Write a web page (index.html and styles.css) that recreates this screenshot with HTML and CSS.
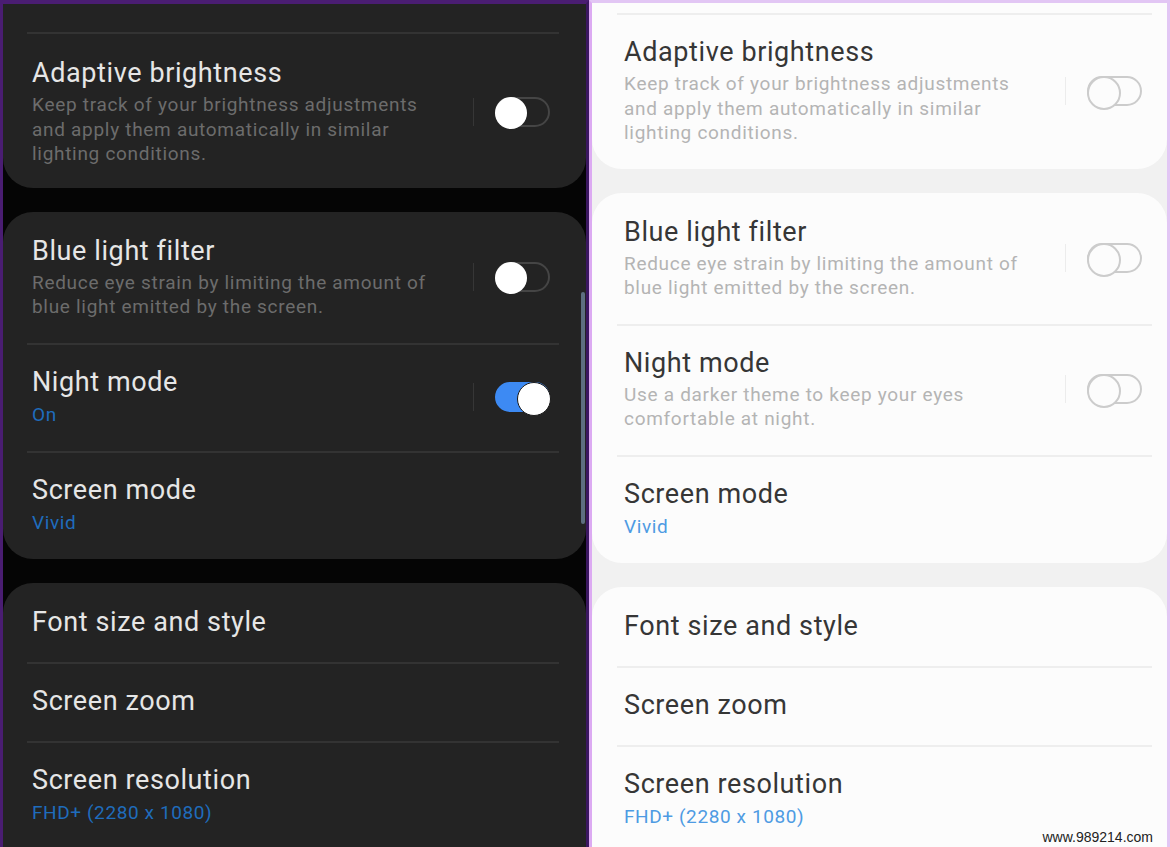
FILE: index.html
```html
<!DOCTYPE html>
<html lang="en">
<head>
    <meta charset="UTF-8">
    <meta name="viewport" content="width=device-width, initial-scale=1.0">
    <title>Display settings</title>
    <link rel="stylesheet" href="styles.css">
</head>
<body>
    <div class="screens">
        <!-- Dark theme -->
        <section class="screen screen-dark">
            <div class="settings">
                <div class="card">
                    <div class="row row-cut"></div>
                    <div class="row row-first">
                        <div class="row-text">
                            <div class="title">Adaptive brightness</div>
                            <div class="desc">Keep track of your brightness adjustments<br>and apply them automatically in similar<br>lighting conditions.</div>
                        </div>
                        <div class="row-control">
                            <span class="sep"></span>
                            <span class="toggle"></span>
                        </div>
                    </div>
                </div>

                <div class="card">
                    <div class="row">
                        <div class="row-text">
                            <div class="title">Blue light filter</div>
                            <div class="desc">Reduce eye strain by limiting the amount of<br>blue light emitted by the screen.</div>
                        </div>
                        <div class="row-control">
                            <span class="sep"></span>
                            <span class="toggle"></span>
                        </div>
                    </div>
                    <div class="row">
                        <div class="row-text">
                            <div class="title">Night mode</div>
                            <div class="value">On</div>
                        </div>
                        <div class="row-control">
                            <span class="sep"></span>
                            <span class="toggle on"></span>
                        </div>
                    </div>
                    <div class="row">
                        <div class="row-text">
                            <div class="title">Screen mode</div>
                            <div class="value">Vivid</div>
                        </div>
                    </div>
                </div>

                <div class="card">
                    <div class="row">
                        <div class="row-text">
                            <div class="title">Font size and style</div>
                        </div>
                    </div>
                    <div class="row">
                        <div class="row-text">
                            <div class="title">Screen zoom</div>
                        </div>
                    </div>
                    <div class="row">
                        <div class="row-text">
                            <div class="title">Screen resolution</div>
                            <div class="value">FHD+ (2280 x 1080)</div>
                        </div>
                    </div>
                    <div class="row row-cut"></div>
                </div>
            </div>
            <span class="scrollbar"></span>
        </section>

        <!-- Light theme -->
        <section class="screen screen-light">
            <div class="settings">
                <div class="card">
                    <div class="row row-cut"></div>
                    <div class="row">
                        <div class="row-text">
                            <div class="title">Adaptive brightness</div>
                            <div class="desc">Keep track of your brightness adjustments<br>and apply them automatically in similar<br>lighting conditions.</div>
                        </div>
                        <div class="row-control">
                            <span class="sep"></span>
                            <span class="toggle"></span>
                        </div>
                    </div>
                </div>

                <div class="card">
                    <div class="row">
                        <div class="row-text">
                            <div class="title">Blue light filter</div>
                            <div class="desc">Reduce eye strain by limiting the amount of<br>blue light emitted by the screen.</div>
                        </div>
                        <div class="row-control">
                            <span class="sep"></span>
                            <span class="toggle"></span>
                        </div>
                    </div>
                    <div class="row">
                        <div class="row-text">
                            <div class="title">Night mode</div>
                            <div class="desc">Use a darker theme to keep your eyes<br>comfortable at night.</div>
                        </div>
                        <div class="row-control">
                            <span class="sep"></span>
                            <span class="toggle"></span>
                        </div>
                    </div>
                    <div class="row">
                        <div class="row-text">
                            <div class="title">Screen mode</div>
                            <div class="value">Vivid</div>
                        </div>
                    </div>
                </div>

                <div class="card">
                    <div class="row">
                        <div class="row-text">
                            <div class="title">Font size and style</div>
                        </div>
                    </div>
                    <div class="row">
                        <div class="row-text">
                            <div class="title">Screen zoom</div>
                        </div>
                    </div>
                    <div class="row">
                        <div class="row-text">
                            <div class="title">Screen resolution</div>
                            <div class="value">FHD+ (2280 x 1080)</div>
                        </div>
                    </div>
                    <div class="row row-cut"></div>
                </div>
            </div>
            <span class="watermark">www.989214.com</span>
        </section>
    </div>
</body>
</html>
```

FILE: styles.css
```css
:root {
    --dark-bg: #050505;
    --dark-card: #232323;
    --dark-title: #e6e6e6;
    --dark-desc: #6c6c6c;
    --dark-line: #333333;
    --dark-value: #1f6cbc;
    --light-bg: #f1f1f1;
    --light-card: #fcfcfc;
    --light-title: #363636;
    --light-desc: #b4b4b4;
    --light-line: #eeeeee;
    --light-value: #4e9be3;
    --toggle-on: #3d8af3;
}

* {
    margin: 0;
    padding: 0;
    box-sizing: border-box;
}

body {
    font-family: Roboto, "Noto Sans", "Liberation Sans", sans-serif;
    background: #000;
    overflow: hidden;
}

.screens {
    display: flex;
    width: 1170px;
    height: 847px;
    overflow: hidden;
}

.screen {
    position: relative;
    height: 847px;
    overflow: hidden;
}

/* Dark screen */
.screen-dark {
    width: 589px;
    background-color: var(--dark-bg);
    border-top: 4px solid #4a1d72;
    border-left: 3px solid #4a1d72;
    border-right: 3px solid #3b1760;
}

/* Light screen */
.screen-light {
    width: 581px;
    background-color: var(--light-bg);
    border-top: 3px solid #e2c6f4;
    border-left: 3px solid #dcaaf2;
    border-right: 3px solid #e2c6f4;
}

.settings {
    display: flex;
    flex-direction: column;
    gap: 24px;
}

.screen-dark .settings {
    margin-top: -52px;
}

.screen-light .settings {
    margin-top: -70px;
}

.card {
    border-radius: 30px;
    overflow: hidden;
}

.screen-dark .card {
    background-color: var(--dark-card);
    padding: 0 36px 0 29px;
}

.screen-light .card {
    background-color: var(--light-card);
    padding: 0 25px 0 32px;
}

.row {
    display: flex;
    align-items: center;
    padding: 23px 0;
    position: relative;
}

.screen-dark .row-first {
    padding: 25px 0 21px;
}

.row-cut {
    height: 80px;
}

/* divider between rows */
.row + .row::before {
    content: "";
    position: absolute;
    top: 0;
    height: 2px;
}

.screen-dark .row + .row::before {
    left: -5px;
    right: -9px;
    background-color: var(--dark-line);
}

.screen-light .row + .row::before {
    left: -7px;
    right: -10px;
    background-color: var(--light-line);
}

.row-text {
    flex: 1;
    display: flex;
    flex-direction: column;
    gap: 3px;
}

.title {
    font-size: 27px;
    line-height: 33px;
    letter-spacing: 0.6px;
}

.desc {
    font-size: 19px;
    line-height: 24.5px;
    letter-spacing: 0.7px;
}

.value {
    font-size: 19px;
    line-height: 26px;
    letter-spacing: 0.6px;
}

.screen-dark .title { color: var(--dark-title); }
.screen-dark .desc { color: var(--dark-desc); }
.screen-dark .value { color: var(--dark-value); }
.screen-light .title { color: var(--light-title); }
.screen-light .desc { color: var(--light-desc); }
.screen-light .value { color: var(--light-value); }

.row-control {
    display: flex;
    align-items: center;
    gap: 21px;
}

.sep {
    width: 1px;
    height: 28px;
}

.screen-dark .sep { background-color: #363636; }
.screen-light .sep { background-color: #ececec; }

/* Toggle */
.toggle {
    position: relative;
    width: 55px;
    height: 30px;
    border-radius: 15px;
}

.toggle::after {
    content: "";
    position: absolute;
    top: -2px;
    left: -2px;
    width: 32px;
    height: 32px;
    border-radius: 50%;
}

.screen-dark .toggle {
    border: 2px solid #454545;
}

.screen-dark .toggle::after {
    background-color: #ffffff;
}

.screen-dark .toggle.on {
    background-color: var(--toggle-on);
    border-color: var(--toggle-on);
}

.screen-dark .toggle.on::after {
    left: auto;
    right: -3px;
    border: 1px solid #1a1a1a;
}

.screen-light .toggle {
    border: 2px solid #cccccc;
}

.screen-light .toggle::after {
    width: 30px;
    height: 30px;
    background-color: #fcfcfc;
    border: 2px solid #cccccc;
}

.scrollbar {
    position: absolute;
    right: 1px;
    top: 288px;
    width: 4px;
    height: 232px;
    background-color: #5d6f80;
    border-radius: 2px;
}

.watermark {
    position: absolute;
    right: 14px;
    bottom: 2px;
    font-family: "Liberation Sans", Arial, sans-serif;
    font-size: 14px;
    color: #222;
}
```
